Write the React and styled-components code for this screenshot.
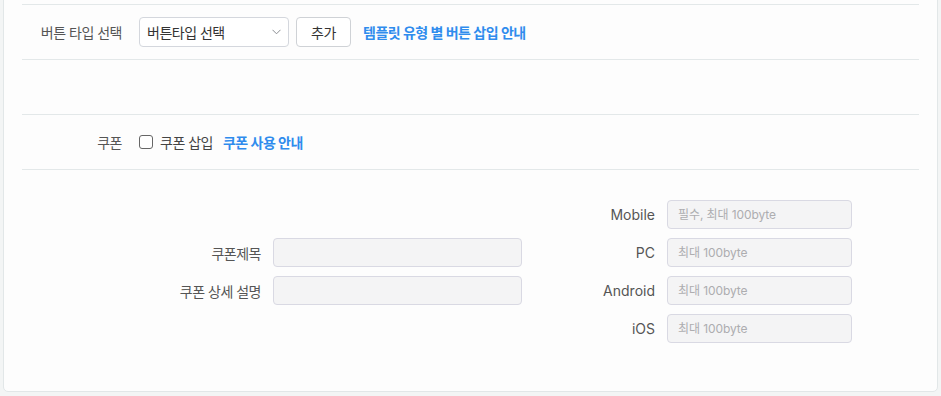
import styled, { createGlobalStyle } from "styled-components";

const GlobalStyle = createGlobalStyle`
    html, body {
        margin: 0;
        padding: 0;
        background: #f3f5f5;
    }
    body {
        font-family: Inter, "Noto Sans CJK KR", sans-serif;
        font-size: 14px;
        letter-spacing: -0.5px;
        color: #555;
    }
    * {
        box-sizing: border-box;
    }
`;

const Page = styled.div`
    width: 941px;
    height: 396px;
    overflow: hidden;
    padding: 0 3px 4px 3px;
`;

const Card = styled.div`
    margin-top: -12px;
    background: #fdfdfd;
    border: 1px solid #e2e7e8;
    border-radius: 5px;
    padding: 15px 18px 0 18px;
`;

const Row = styled.div`
    height: 55px;
    border-top: 1px solid #e3e8e9;
    display: flex;
    align-items: center;
`;

const RowLabel = styled.div`
    width: 117px;
    padding-right: 17px;
    text-align: right;
    color: #555;
`;

const Controls = styled.div`
    display: flex;
    align-items: center;
`;

const SelectBox = styled.div`
    width: 150px;
    height: 30px;
    border: 1px solid #d4d7dd;
    border-radius: 4px;
    background: #fff;
    display: flex;
    align-items: center;
    padding: 0 7px;
    color: #333;
`;

const Chevron = styled.svg`
    margin-left: auto;
`;

const Button = styled.button`
    margin-left: 7px;
    width: 55px;
    height: 30px;
    border: 1px solid #cfd2d6;
    border-radius: 4px;
    background: #fff;
    color: #333;
    font-family: inherit;
    font-size: 14px;
    letter-spacing: -0.5px;
    padding: 0;
`;

const Link = styled.a`
    margin-left: ${(p) => p.$gap || 12}px;
    color: #2f8ced;
    font-weight: 700;
    text-decoration: none;
`;

const Check = styled.span`
    width: 14px;
    height: 14px;
    border: 1px solid #666;
    border-radius: 3px;
    background: #fff;
`;

const CheckText = styled.span`
    margin-left: 7px;
    color: #444;
`;

const Bottom = styled.div`
    border-top: 1px solid #e3e8e9;
    display: flex;
    align-items: center;
    padding: 30px 0 48px 139px;
`;

const FieldGroup = styled.div`
    display: grid;
    grid-template-columns: ${(p) => p.$labelWidth}px ${(p) => p.$inputWidth}px;
    column-gap: 12px;
    row-gap: 9px;
    align-items: center;
    margin-left: ${(p) => p.$offset || 0}px;
`;

const FieldLabel = styled.label`
    text-align: right;
    color: #555;
    letter-spacing: ${(p) => (p.$latin ? 0 : -0.5)}px;
`;

const Input = styled.input`
    height: 29px;
    width: 100%;
    border: 1px solid #d9d9e3;
    border-radius: 4px;
    background: #f4f4f5;
    padding: 0 10px;
    font-family: inherit;
    font-size: 12px;
    letter-spacing: -0.1px;
    color: #333;
    outline: none;
    &::placeholder {
        color: #adadb0;
    }
`;

const linkFields = [
    { label: "Mobile", placeholder: "필수, 최대 100byte" },
    { label: "PC", placeholder: "최대 100byte" },
    { label: "Android", placeholder: "최대 100byte" },
    { label: "iOS", placeholder: "최대 100byte" },
];

function App() {
    return (
        <Page>
            <GlobalStyle />
            <Card>
                <Row>
                    <RowLabel>버튼 타입 선택</RowLabel>
                    <Controls>
                        <SelectBox>
                            버튼타입 선택
                            <Chevron width="9" height="6" viewBox="0 0 9 6">
                                <path d="M0.5 0.8 L4.5 4.8 L8.5 0.8" fill="none" stroke="#8a8d92" strokeWidth="1" />
                            </Chevron>
                        </SelectBox>
                        <Button>추가</Button>
                        <Link href="#">템플릿 유형 별 버튼 삽입 안내</Link>
                    </Controls>
                </Row>
                <Row />
                <Row>
                    <RowLabel>쿠폰</RowLabel>
                    <Controls>
                        <Check />
                        <CheckText>쿠폰 삽입</CheckText>
                        <Link href="#" $gap={10}>쿠폰 사용 안내</Link>
                    </Controls>
                </Row>
                <Bottom>
                    <FieldGroup $labelWidth={100} $inputWidth={249}>
                        <FieldLabel>쿠폰제목</FieldLabel>
                        <Input />
                        <FieldLabel>쿠폰 상세 설명</FieldLabel>
                        <Input />
                    </FieldGroup>
                    <FieldGroup $labelWidth={80} $inputWidth={185} $offset={53}>
                        {linkFields.map((f) => [
                            <FieldLabel key={f.label + "-label"} $latin>{f.label}</FieldLabel>,
                            <Input key={f.label} placeholder={f.placeholder} />,
                        ])}
                    </FieldGroup>
                </Bottom>
            </Card>
        </Page>
    );
}

export default App;
